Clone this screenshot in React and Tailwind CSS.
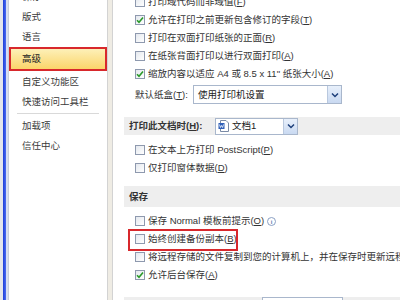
const Check = ({ checked }) => (
  <span className="flex h-[10px] w-[10px] shrink-0 items-center justify-center border border-[#8e99ae] bg-[linear-gradient(135deg,#e4e8ee,#ffffff)]">
    {checked && (
      <svg width="8" height="8" viewBox="0 0 8 8">
        <path d="M1 4.2 L3 6.3 L7 1.5" fill="none" stroke="#2a9a2a" strokeWidth="1.6" />
      </svg>
    )}
  </span>
)

const Key = ({ k }) => (
  <span>
    (<u>{k}</u>)
  </span>
)

const Row = ({ checked, children, box }) => (
  <div className="relative flex h-[18px] shrink-0 items-center gap-[3px] pl-[22px] whitespace-nowrap">
    <Check checked={checked} />
    <span className="text-[#333]">{children}</span>
    {box && <div className="absolute left-[15px] top-[-1px] h-[22px] w-[110px] border-2 border-[#d8282c]" />}
  </div>
)

const Chevron = () => (
  <svg width="8" height="6" viewBox="0 0 8 6">
    <path d="M1 1.5 L4 4.5 L7 1.5" fill="none" stroke="#1e3f7a" strokeWidth="1.5" />
  </svg>
)

const sideItems = ["版式", "语言"]

export default function App() {
  return (
    <div
      className="flex h-[300px] w-[400px] overflow-hidden bg-white text-[9.5px] leading-none"
      style={{ fontFamily: '"Liberation Sans", "Noto Sans CJK SC", sans-serif' }}
    >
      {/* left edge */}
      <div className="w-[3px] shrink-0 bg-[#e3e6ec]" />
      <div className="w-[3px] shrink-0 bg-[linear-gradient(90deg,#1f3fd8,#4a6cf2)]" />
      <div className="w-[3px] shrink-0 bg-[#d6def2] border-r border-[#c9cfd9]" />

      {/* sidebar */}
      <div className="flex w-[98px] shrink-0 flex-col text-[#3a3a3a]">
        <div className="-mt-[13px] flex h-[20px] shrink-0 items-center pl-[13px]">保存</div>
        {sideItems.map((t) => (
          <div key={t} className="flex h-[20px] shrink-0 items-center pl-[13px]">
            {t}
          </div>
        ))}
        <div className="flex h-[24px] shrink-0 items-center border-2 border-[#d8282c] bg-[linear-gradient(180deg,#fdf0b8,#fbd56a)] pl-[11px] text-[#222]">
          高级
        </div>
        <div className="flex h-[21px] shrink-0 items-center pl-[13px]">自定义功能区</div>
        <div className="flex h-[20px] shrink-0 items-center pl-[13px]">快速访问工具栏</div>
        <div className="mx-[8px] mt-[1px] h-px shrink-0 bg-[#d9d9d9]" />
        <div className="mt-[2px] flex h-[20px] shrink-0 items-center pl-[13px]">加载项</div>
        <div className="flex h-[20px] shrink-0 items-center pl-[13px]">信任中心</div>
      </div>

      {/* divider strip */}
      <div className="w-[6px] shrink-0 border-x border-[#d3d3d3] bg-[#efece4]" />

      {/* content */}
      <div className="flex min-w-0 flex-1 flex-col">
        <div className="-mt-[7px]" />
        <Row>打印域代码而非域值<Key k="F" /></Row>
        <Row checked>允许在打印之前更新包含修订的字段<Key k="T" /></Row>
        <Row>打印在双面打印纸张的正面<Key k="R" /></Row>
        <Row>在纸张背面打印以进行双面打印<Key k="A" /></Row>
        <Row checked>缩放内容以适应 A4 或 8.5 x 11" 纸张大小<Key k="A" /></Row>

        <div className="mt-[2px] flex h-[19px] shrink-0 items-center pl-[22px] whitespace-nowrap">
          <span className="w-[58px] shrink-0 text-[#333]">默认纸盒<Key k="T" />:</span>
          <div className="flex h-[19px] w-[149px] items-stretch border border-[#a9b7cc] bg-white">
            <span className="flex flex-1 items-center pl-[4px] text-[#222]">使用打印机设置</span>
            <span className="flex w-[14px] items-center justify-center border-l border-[#b9c8de] bg-[linear-gradient(180deg,#e8f0fb,#c9d9f1)]">
              <Chevron />
            </span>
          </div>
        </div>

        <div className="ml-[11px] mt-[13px] flex h-[18px] shrink-0 items-center bg-[#eeeeee] pl-[5px] whitespace-nowrap">
          <span className="w-[86px] shrink-0 font-bold text-[#333]">打印此文档时<Key k="H" />:</span>
          <div className="flex h-[17px] w-[83px] items-stretch border border-[#a9b7cc] bg-white">
            <span className="flex flex-1 items-center gap-[3px] pl-[2px] text-[#222]">
              <svg width="11" height="12" viewBox="0 0 11 12">
                <path d="M2.5 0.5 H8 L10.5 3 V11.5 H2.5 Z" fill="#fff" stroke="#7a8aa6" />
                <rect x="0.5" y="3" width="6" height="6" fill="#2f5fb8" />
                <path d="M1.5 4.5 L2.4 7.5 L3.5 5.5 L4.6 7.5 L5.5 4.5" fill="none" stroke="#fff" strokeWidth="0.8" />
              </svg>
              文档1
            </span>
            <span className="flex w-[14px] items-center justify-center border-l border-[#b9c8de] bg-[linear-gradient(180deg,#e8f0fb,#c9d9f1)]">
              <Chevron />
            </span>
          </div>
        </div>

        <div className="mt-[6px]" />
        <Row>在文本上方打印 PostScript<Key k="P" /></Row>
        <Row>仅打印窗体数据<Key k="D" /></Row>

        <div className="ml-[11px] mt-[9px] flex h-[21px] shrink-0 items-center bg-[#eeeeee] pl-[5px] font-bold text-[#333]">
          保存
        </div>

        <div className="mt-[5px]" />
        <Row>
          保存 Normal 模板前提示<Key k="O" />
          <span className="ml-[3px] inline-flex h-[9px] w-[9px] items-center justify-center rounded-full border border-[#8aa0c4] text-[6px] font-bold text-[#5a7ab0]">
            i
          </span>
        </Row>
        <Row box>始终创建备份副本<Key k="B" /></Row>
        <Row>将远程存储的文件复制到您的计算机上，并在保存时更新远程文件</Row>
        <Row checked>允许后台保存<Key k="A" /></Row>

        <div className="ml-[11px] mt-[13px] flex h-[20px] shrink-0 bg-[#eeeeee] pl-[138px]">
          <div className="h-[18px] w-[81px] border border-[#a9b7cc] bg-white" />
        </div>
      </div>
    </div>
  )
}
